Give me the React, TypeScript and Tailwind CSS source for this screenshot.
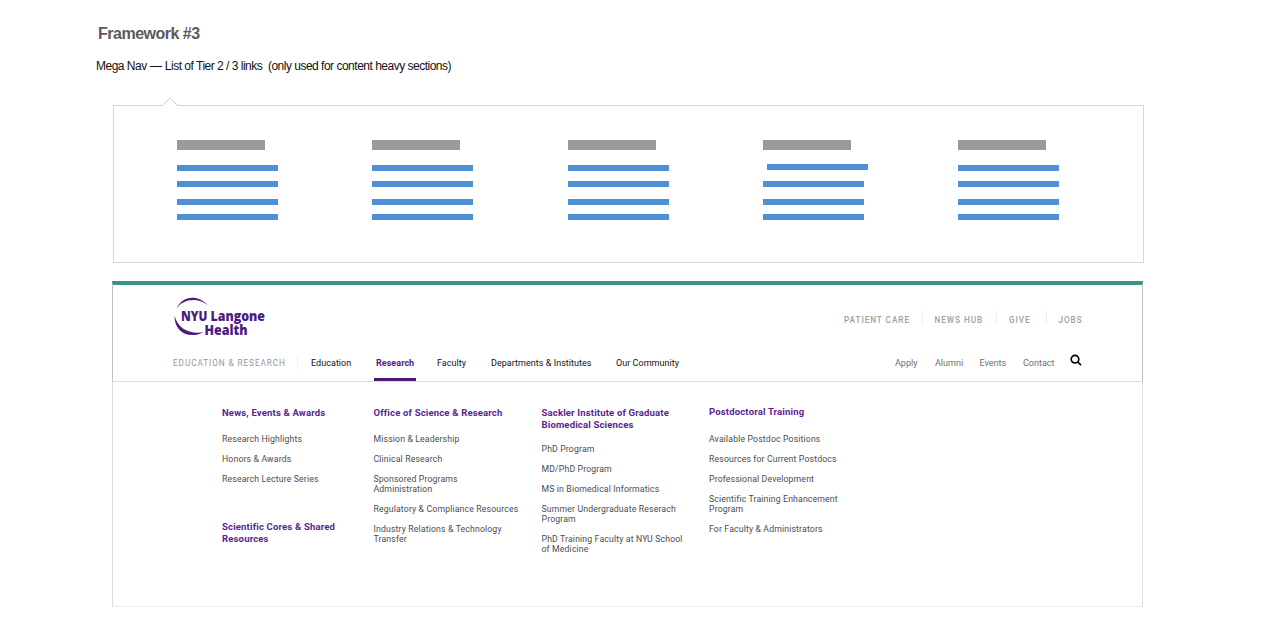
import { Fragment } from 'react';

type LinkGroup = {
  title: string[];
  links: string[][];
  titleClass: string;
  listClass: string;
};

const wireColumns = [0, 1, 2, 3, 4];

const utilityLinks = [
  { label: 'PATIENT CARE', className: 'w-[77.5px]' },
  { label: 'NEWS HUB', className: 'w-[61.5px]' },
  { label: 'GIVE', className: 'w-[36.5px]' },
  { label: 'JOBS', className: 'w-[24px]' },
];

const sectionLinks = [
  { label: 'Education', className: 'w-[65px]' },
  { label: 'Research', className: 'w-[61px]', active: true },
  { label: 'Faculty', className: 'w-[54px]' },
  { label: 'Departments & Institutes', className: 'w-[125px]' },
  { label: 'Our Community', className: 'w-[70px]' },
];

const quickLinks = [
  { label: 'Apply', className: 'w-[40px]' },
  { label: 'Alumni', className: 'w-[44.5px]' },
  { label: 'Events', className: 'w-[43.5px]' },
  { label: 'Contact', className: 'w-[47px]' },
];

const columns: { className: string; groups: LinkGroup[] }[] = [
  {
    className: 'w-[151.5px] pt-[25px]',
    groups: [
      {
        title: ['News, Events & Awards'],
        links: [['Research Highlights'], ['Honors & Awards'], ['Research Lecture Series']],
        titleClass: '',
        listClass: 'mt-[15px]',
      },
      {
        title: ['Scientific Cores & Shared', 'Resources'],
        links: [],
        titleClass: 'mt-[37.5px]',
        listClass: '',
      },
    ],
  },
  {
    className: 'w-[168px] pt-[25px]',
    groups: [
      {
        title: ['Office of Science & Research'],
        links: [
          ['Mission & Leadership'],
          ['Clinical Research'],
          ['Sponsored Programs', 'Administration'],
          ['Regulatory & Compliance Resources'],
          ['Industry Relations & Technology', 'Transfer'],
        ],
        titleClass: '',
        listClass: 'mt-[15px]',
      },
    ],
  },
  {
    className: 'w-[167.5px] pt-[25px]',
    groups: [
      {
        title: ['Sackler Institute of Graduate', 'Biomedical Sciences'],
        links: [
          ['PhD Program'],
          ['MD/PhD Program'],
          ['MS in Biomedical Informatics'],
          ['Summer Undergraduate Reserach', 'Program'],
          ['PhD Training Faculty at NYU School', 'of Medicine'],
        ],
        titleClass: '',
        listClass: 'mt-[14px]',
      },
    ],
  },
  {
    className: 'w-[167px] pt-[24px]',
    groups: [
      {
        title: ['Postdoctoral Training'],
        links: [
          ['Available Postdoc Positions'],
          ['Resources for Current Postdocs'],
          ['Professional Development'],
          ['Scientific Training Enhancement', 'Program'],
          ['For Faculty & Administrators'],
        ],
        titleClass: '',
        listClass: 'mt-[16px]',
      },
    ],
  },
];

function Logo() {
  return (
    <svg width="100" height="42" viewBox="0 0 100 42" className="block overflow-visible text-[#4f1a7f]" fill="currentColor">
      <path d="M3.6 13.6 C9 0.5 25 -1 34.8 10.2 C25 2.4 10.5 3.2 3.6 13.6 Z" />
      <path d="M1.6 20.5 C0.8 36 15 45 30.5 37.2 C17 39.4 4.5 34 1.6 20.5 Z" />
      <g fontFamily="'Open Sans', 'Noto Sans', sans-serif" fontWeight="800" fontSize="14.8">
        <text x="8" y="26" textLength="26.5" lengthAdjust="spacingAndGlyphs">NYU</text>
        <text x="37.5" y="26" textLength="54.5" lengthAdjust="spacingAndGlyphs">Langone</text>
        <text x="31.5" y="39.800" textLength="43" lengthAdjust="spacingAndGlyphs">Health</text>
      </g>
    </svg>
  );
}

function Wireframe() {
  return (
    <div className="relative ml-[113px] mt-[30px] h-[158px] w-[1031px] border border-[#d6d6d6]">
      {/* Notch pointing at the active nav item */}
      <svg className="absolute -top-[9px] left-[48px]" width="16" height="9" viewBox="0 0 16 9">
        <path d="M0.5 9 L8 1 L15.5 9 Z" fill="#fff" />
        <path d="M0.5 8.5 L8 1 L15.5 8.5" fill="none" stroke="#cfcfcf" />
      </svg>
      <div className="flex pl-[63.2px] pt-[34px]">
        {wireColumns.map((col) => (
          <div key={col} className="w-[195.2px] shrink-0">
            <div className="h-[10px] w-[88px] bg-[#9a9a9a]" />
            <div className={`h-[6px] w-[101px] bg-[#4f8fd5] ${col === 3 ? 'ml-[4.5px] mt-[14px] mb-[11px]' : 'mt-[15px] mb-[10px]'}`} />
            <div className="h-[6px] w-[101px] bg-[#4f8fd5]" />
            <div className="mt-[12px] h-[6px] w-[101px] bg-[#4f8fd5]" />
            <div className="mt-[9px] h-[6px] w-[101px] bg-[#4f8fd5]" />
          </div>
        ))}
      </div>
    </div>
  );
}

function Header() {
  return (
    <header className="h-[101px] w-[1031px] border-x border-b border-t-4 border-x-[#bfbfbf] border-b-[#dcdcdc] border-t-[#3a9388] pl-[60px]">
      <div className="flex h-[55px] justify-between pt-[10px]">
        <Logo />
        <div className="mr-[59.5px] flex pt-[16px]">
          {utilityLinks.map((item, i) => (
            <Fragment key={item.label}>
              {i > 0 && <div className="mr-[12px] h-[13px] w-px bg-[#eeeeee]" />}
              <a className={`whitespace-nowrap text-[8.2px] font-medium leading-[18px] tracking-[0.95px] text-[#a0a0a0] ${item.className}`}>
                {item.label}
              </a>
            </Fragment>
          ))}
        </div>
      </div>
      <div className="flex h-[41px]">
        <span className="w-[124px] whitespace-nowrap pt-[13px] text-[8.2px] leading-[20px] tracking-[0.94px] text-[#959595]">
          EDUCATION &amp; RESEARCH
        </span>
        <div className="mr-[13px] mt-[16px] h-[13px] w-px bg-[#f0f0f0]" />
        <nav className="flex">
          {sectionLinks.map((item) => (
            <div key={item.label} className={`whitespace-nowrap pt-[13px] text-[9px] leading-[20px] tracking-[0.04px] ${item.className}`}>
              <a className={item.active ? 'font-bold text-[#55208a]' : 'text-[#111111]'}>{item.label}</a>
              {item.active && <div className="-ml-[2px] mt-[5px] h-[3px] w-[42px] bg-[#4b1a75]" />}
            </div>
          ))}
        </nav>
        <div className="ml-auto mr-[60px] flex">
          {quickLinks.map((item) => (
            <a key={item.label} className={`whitespace-nowrap pt-[13px] text-[9px] leading-[20px] text-[#707070] ${item.className}`}>
              {item.label}
            </a>
          ))}
          <svg className="mt-[14px]" width="12" height="12" viewBox="0 0 12 12" fill="none" stroke="#000" strokeWidth="1.7">
            <circle cx="5" cy="5.2" r="3.8" />
            <path d="M7.8 8 L11 11.2" />
          </svg>
        </div>
      </div>
    </header>
  );
}

function MegaMenu() {
  return (
    <div className="flex h-[225px] w-[1031px] border-x border-b border-x-[#dedede] border-b-[#eeeeee] pl-[109px]">
      {columns.map((col) => (
        <div key={col.groups[0].title[0]} className={`whitespace-nowrap ${col.className}`}>
          {col.groups.map((group) => (
            <section key={group.title[0]} className={group.titleClass}>
              <h3 className="text-[9.5px] font-bold leading-[11.5px] tracking-[0.17px] text-[#5c2391]">
                {group.title.map((line) => (
                  <span key={line} className="block">{line}</span>
                ))}
              </h3>
              <ul className={`flex flex-col gap-[10px] text-[8.7px] leading-[10px] tracking-[0.15px] text-[#4c4c4c] ${group.listClass}`}>
                {group.links.map((lines) => (
                  <li key={lines[0]}>
                    {lines.map((line) => (
                      <span key={line} className="block">{line}</span>
                    ))}
                  </li>
                ))}
              </ul>
            </section>
          ))}
        </div>
      ))}
    </div>
  );
}

export default function App() {
  return (
    <div className="h-[638px] w-[1280px] overflow-hidden bg-white pt-[23px] font-['Liberation_Sans',sans-serif]">
      <h1 className="ml-[98px] text-[16px] font-bold leading-[22px] tracking-[-0.5px] text-[#5a5a5a]">Framework #3</h1>
      <p className="ml-[96px] mt-[12px] whitespace-pre text-[12px] leading-[18px] tracking-[-0.5px] text-[#111111]">
        {'Mega Nav '}
        <span className="mx-[0.5px]">—</span>
        {' List of Tier 2 / 3 links  (only used for content heavy sections)'}
      </p>
      <Wireframe />
      <div className="ml-[112px] mt-[18px] font-['Roboto',sans-serif]">
        <Header />
        <MegaMenu />
      </div>
    </div>
  );
}
